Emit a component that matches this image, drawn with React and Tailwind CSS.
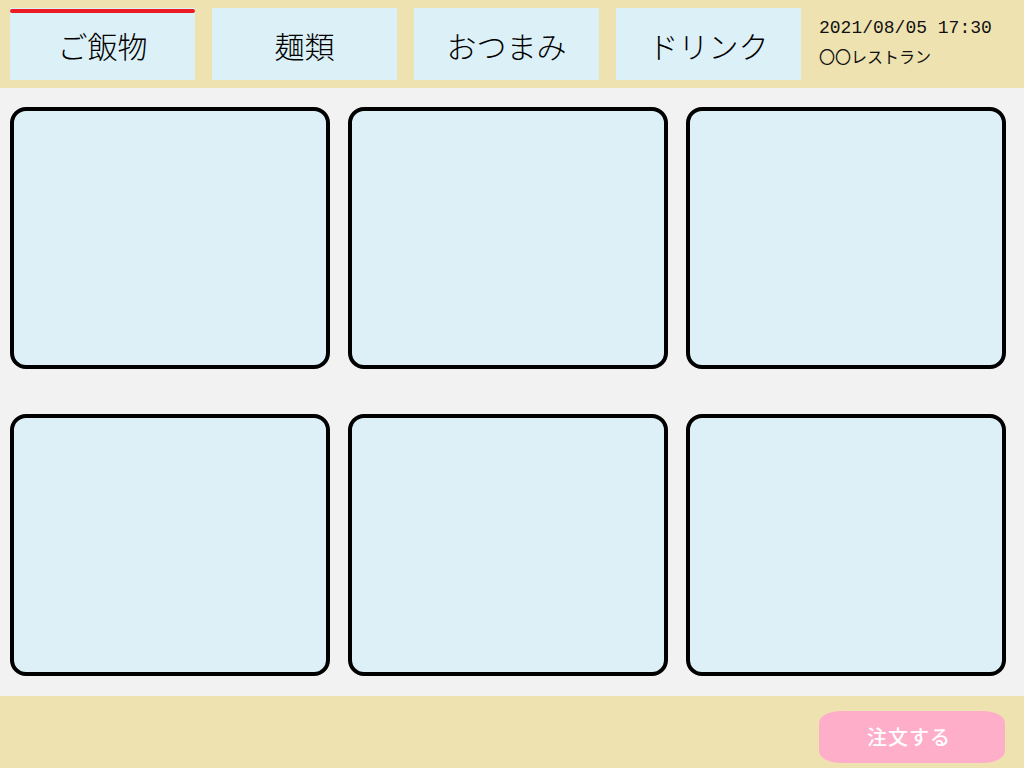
import React from "react";

const tabs = ["ご飯物", "麺類", "おつまみ", "ドリンク"];

const App = () => {
  return (
    <div
      className="w-[1024px] h-[768px] flex flex-col bg-[#f2f2f2]"
      style={{ fontFamily: '"Noto Sans CJK JP", "Noto Sans", sans-serif' }}
    >
      {/* Header */}
      <div className="h-[88px] bg-[#eee2b0] flex items-start pt-[8px] pl-[10px]">
        <div className="flex gap-[17px]">
          {tabs.map((tab, i) => (
            <div
              key={i}
              className="relative w-[185px] h-[72px] bg-[#dcf0f7] flex items-center justify-center text-[30px] font-light text-black leading-none"
            >
              {i === 0 && (
                <div className="absolute top-[1px] left-0 right-0 h-[4px] rounded-full bg-[#ed1c24]" />
              )}
              <span className="pt-[2px]">{tab}</span>
            </div>
          ))}
        </div>
        <div className="ml-[18px] pt-[8px] flex flex-col">
          <span
            className="text-[18px] leading-[24px] text-[#111]"
            style={{ fontFamily: '"Liberation Mono", "DejaVu Sans Mono", monospace' }}
          >
            2021/08/05 17:30
          </span>
          <span className="text-[16px] leading-[24px] text-[#111] mt-[4px]">〇〇レストラン</span>
        </div>
      </div>

      {/* Menu grid */}
      <div className="flex-1 pt-[19px] px-[10px]">
        <div className="grid grid-cols-[320px_320px_320px] grid-rows-[262px_262px] gap-x-[18px] gap-y-[45px]">
          {[0, 1, 2, 3, 4, 5].map((n) => (
            <div key={n} className="bg-[#ddf0f7] border-[4px] border-black rounded-[16px]" />
          ))}
        </div>
      </div>

      {/* Footer */}
      <div className="h-[72px] bg-[#eee2b0] flex items-center justify-end pr-[19px]">
        <button className="w-[186px] h-[52px] bg-[#ffaec9] rounded-[22px/12px] text-white text-[20px] font-medium tracking-[1px] mt-[10px] pr-[6px]">
          注文する
        </button>
      </div>
    </div>
  );
};

export default App;
